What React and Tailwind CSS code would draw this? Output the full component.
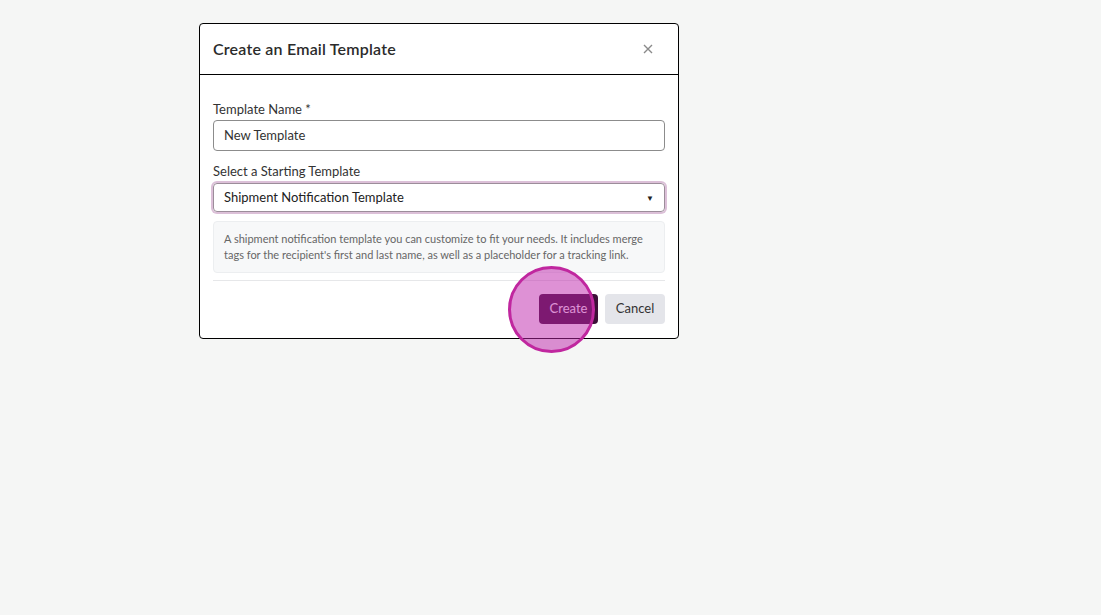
export default function App() {
    return (
        <div className="min-h-screen w-full bg-[#f5f6f5] pt-[23px] pl-[199px]" style={{ fontFamily: 'Lato, "Open Sans", sans-serif' }}>
            {/* Dialog */}
            <div className="w-[480px] rounded-[4px] border border-black bg-white">
                {/* Header */}
                <div className="flex h-[51px] items-center justify-between border-b border-black px-[13px]">
                    <h2 className="text-[16px] font-semibold tracking-[0.2px] text-[#2b2b2b]">Create an Email Template</h2>
                    <button className="mr-[12px] text-[#8a8a8a]">
                        <svg width="10" height="10" viewBox="0 0 10 10" fill="none" stroke="currentColor" strokeWidth="1.4">
                            <path d="M1 1L9 9M9 1L1 9" />
                        </svg>
                    </button>
                </div>

                {/* Body */}
                <div className="px-[13px] pt-[26px] pb-[14px]">
                    <label className="block text-[13px] leading-[16px] text-[#333]">Template Name *</label>
                    <div className="mt-[3px] flex h-[31px] items-center rounded-[4px] border border-[#8c8c8c] px-[10px] text-[13px] text-[#333]">
                        New Template
                    </div>

                    <label className="mt-[12px] block text-[13px] leading-[16px] text-[#333]">Select a Starting Template</label>
                    <div className="mt-[4px] flex h-[29px] items-center justify-between rounded-[4px] border border-[#9c8d9a] px-[10px] text-[13px] text-[#222] ring-2 ring-[#dcc0d8]">
                        <span>Shipment Notification Template</span>
                        <span className="text-[8px] text-[#222]">▼</span>
                    </div>

                    <div className="mt-[9px] rounded-[4px] border border-[#eceef0] bg-[#f7f8f9] px-[10px] py-[9px] text-[11px] leading-[16px] text-[#666]">
                        A shipment notification template you can customize to fit your needs. It includes merge tags for the recipient's first and last name, as well as a placeholder for a tracking link.
                    </div>

                    <div className="mt-[7px] border-t border-[#e6e7e9]" />

                    {/* Footer */}
                    <div className="mt-[13px] flex justify-end gap-[7px]">
                        <div className="relative">
                            <button className="h-[30px] w-[59px] rounded-[4px] bg-[#3c0f37] text-[13px] text-white">Create</button>
                            <div className="pointer-events-none absolute left-[-31px] top-[-28px] h-[87px] w-[87px] rounded-full border-[3px] border-[#c0279f] bg-[rgba(190,35,172,0.5)]" />
                        </div>
                        <button className="h-[30px] w-[60px] rounded-[4px] bg-[#e4e5ea] text-[13px] text-[#333]">Cancel</button>
                    </div>
                </div>
            </div>
        </div>
    );
}
